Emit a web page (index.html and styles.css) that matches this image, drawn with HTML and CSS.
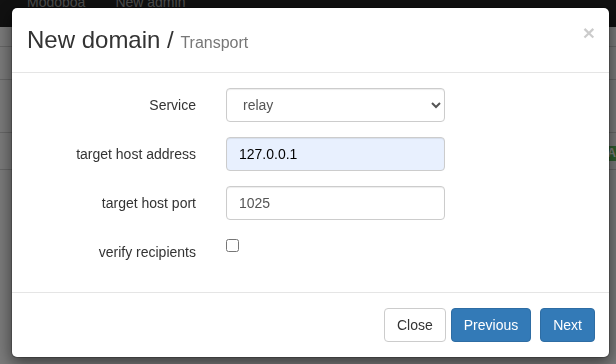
FILE: index.html
```html
<!DOCTYPE html>
<html>
<head>
<meta charset="utf-8">
<link rel="stylesheet" href="styles.css">
</head>
<body>
<div class="page">
  <nav class="navbar">
    <span class="brand">Modoboa</span>
    <span class="nav-link">New admin</span>
  </nav>
  <div class="content">
    <div class="strip"></div>
    <div class="prow r1"></div>
    <div class="prow r2"></div>
    <div class="prow r3"><span class="badge">AP</span></div>
  </div>
</div>
<div class="backdrop"></div>
<div class="modal">
  <div class="modal-content">
    <div class="modal-header">
      <h4 class="modal-title">New domain / <small>Transport</small></h4>
      <button class="close" type="button">×</button>
    </div>
    <div class="modal-body">
      <form class="form-horizontal">
        <div class="form-group">
          <label class="control-label">Service</label>
          <div class="field">
            <select class="form-control"><option>relay</option></select>
          </div>
        </div>
        <div class="form-group">
          <label class="control-label">target host address</label>
          <div class="field">
            <input class="form-control autofill" type="text" value="127.0.0.1">
          </div>
        </div>
        <div class="form-group">
          <label class="control-label">target host port</label>
          <div class="field">
            <input class="form-control" type="text" value="1025">
          </div>
        </div>
        <div class="form-group last">
          <label class="control-label">verify recipients</label>
          <div class="field check">
            <input type="checkbox">
          </div>
        </div>
      </form>
    </div>
    <div class="modal-footer">
      <button class="btn btn-default" type="button">Close</button><button class="btn btn-primary" type="button">Previous</button> <button class="btn btn-primary" type="button">Next</button>
    </div>
  </div>
</div>
</body>
</html>
```

FILE: styles.css
```css
* { box-sizing: border-box; }
html, body { margin: 0; padding: 0; }
body {
  font-family: "Liberation Sans", Arial, sans-serif;
  font-size: 14px;
  line-height: 1.42857;
  color: #333;
  background: #f4f4f4;
  width: 616px;
  height: 364px;
  overflow: hidden;
}
.page { height: 364px; }
.navbar {
  height: 27px;
  background: #222;
  display: flex;
  gap: 30px;
  padding-left: 27px;
  color: #9d9d9d;
  font-size: 14px;
  line-height: 20px;
}
.navbar span { margin-top: -8px; }
.content { display: flex; flex-direction: column; }
.strip { height: 20px; border-bottom: 1px solid #ccc; }
.prow { border-bottom: 1px solid #ccc; display: flex; justify-content: flex-end; align-items: flex-start; }
.r1 { height: 33px; }
.r2 { height: 53px; }
.r3 { height: 37px; padding-top: 13px; }
.badge {
  background: #5cb85c;
  color: #fff;
  font-size: 12px;
  font-weight: bold;
  padding: 0 6px;
  margin-right: -14px;
  line-height: 15px;
  border-radius: 3px;
}
.backdrop {
  position: fixed;
  inset: 0;
  background: rgba(0, 0, 0, 0.5);
}
.modal {
  position: fixed;
  inset: 0;
  padding: 7px 6px 0 11px;
}
.modal-content {
  background: #fff;
  border: 1px solid rgba(0, 0, 0, 0.2);
  border-radius: 6px;
  box-shadow: 0 5px 15px rgba(0, 0, 0, 0.5);
  background-clip: padding-box;
}
.modal-header {
  padding: 15px;
  height: 65px;
  border-bottom: 1px solid #e5e5e5;
  display: flex;
  justify-content: space-between;
  align-items: flex-start;
}
.modal-title {
  margin: 0;
  font-size: 24px;
  font-weight: normal;
  line-height: 34px;
  color: #333;
}
.modal-title small {
  font-size: 16px;
  line-height: 1;
  color: #777;
}
.close {
  border: 0;
  background: transparent;
  padding: 0;
  margin-top: -1px;
  margin-right: -1px;
  font-family: "Liberation Sans", Arial, sans-serif;
  font-size: 21px;
  font-weight: bold;
  line-height: 1;
  color: #000;
  opacity: 0.2;
  cursor: pointer;
}
.modal-body { padding: 15px; }
.form-horizontal { display: flex; flex-direction: column; }
.form-group {
  display: grid;
  grid-template-columns: 33.3333% 41.6667%;
  margin: 0 -15px 15px;
}
.control-label {
  padding: 7px 15px 0;
  text-align: right;
  font-weight: normal;
  line-height: 20px;
}
.field { padding: 0 15px; }
.form-control {
  display: block;
  width: 100%;
  height: 34px;
  padding: 6px 12px;
  font-family: "Liberation Sans", Arial, sans-serif;
  font-size: 14px;
  line-height: 1.42857;
  color: #555;
  background-color: #fff;
  border: 1px solid #ccc;
  border-radius: 4px;
  box-shadow: inset 0 1px 1px rgba(0, 0, 0, 0.075);
  margin: 0;
}
.form-control.autofill { background-color: #e8f0fe; color: #000; }
.check { padding-top: 4px; }
.check input { margin: 0; width: 13px; height: 13px; display: block; }
.modal-footer {
  border-top: 1px solid #e5e5e5;
  padding: 15px 14px 15px 15px;
  text-align: right;
  font-size: 0;
}
.modal-footer .btn + .btn { margin-left: 5px; }
.btn {
  display: inline-block;
  height: 34px;
  padding: 6px 12px;
  font-family: "Liberation Sans", Arial, sans-serif;
  font-size: 14px;
  line-height: 20px;
  border: 1px solid transparent;
  border-radius: 4px;
  vertical-align: middle;
  cursor: pointer;
}
.modal-footer .btn-primary + .btn-primary { margin-left: 9px; }
.btn-default { color: #333; background: #fff; border-color: #ccc; }
.btn-primary { color: #fff; background: #337ab7; border-color: #2e6da4; }
```
